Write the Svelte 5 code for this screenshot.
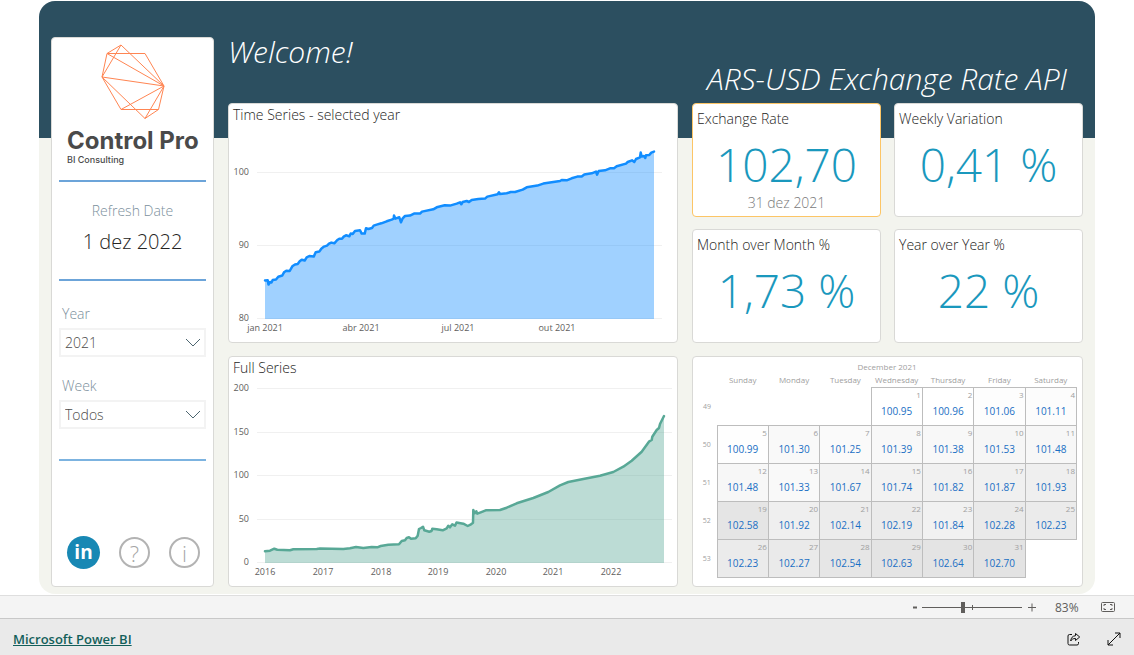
<script lang="ts">
	type Point = [number, number];

	interface Tick {
		at: number;
		label: string;
	}

	interface Chart {
		title: string;
		height: number;
		gridEnd: number;
		yTicks: Tick[];
		xTicks: Tick[];
		points: Point[];
	}

	const yearChart: Chart = {
		title: 'Time Series - selected year',
		height: 216,
		gridEnd: 433,
		yTicks: [
			{ at: 46, label: '100' },
			{ at: 119, label: '90' },
			{ at: 192, label: '80' },
		],
		xTicks: [
			{ at: 36, label: 'jan 2021' },
			{ at: 132, label: 'abr 2021' },
			{ at: 229, label: 'jul 2021' },
			{ at: 328, label: 'out 2021' },
		],
		points: [
			[36, 154.5], [38.7, 154.3], [39.5, 158.5], [41, 156], [42.5, 156.5], [43.7, 154], [47, 153.5],
			[49.3, 150.7], [53.3, 149.5], [55, 146.3], [57.3, 144.7], [60.7, 145], [63.3, 140.3], [66, 138.5],
			[68.7, 138], [70.7, 135.3], [72.7, 133.7], [75.7, 134.5], [77.7, 131.3], [80.3, 130], [84.7, 130.6],
			[86.7, 126.3], [90.3, 125.6], [92.3, 122.7], [95, 120.6], [98, 119.6], [100, 117.7], [102.3, 116.6],
			[105.3, 117.3], [108.3, 114], [110.3, 112.7], [113, 112.7], [114.7, 110.6], [117, 109.3], [120.3, 110.3],
			[121.7, 107.6], [123.7, 108], [126, 105], [131, 104.3], [132.7, 107.6], [135.7, 107.6], [137, 102.3],
			[139.3, 103], [143, 102], [144.7, 99.6], [147.7, 98.6], [152.3, 97.3], [157.7, 95.3], [162.7, 93.6],
			[164.7, 92.6], [165, 89.6], [166.3, 92.6], [170.3, 91.3], [172, 96.3], [173.7, 92.3], [176, 90],
			[181, 89.6], [185, 87.6], [191, 87.6], [193, 85.6], [204.3, 83.3], [207.7, 81.3], [215.7, 79.3],
			[221, 79.6], [227.7, 77.6], [231, 76.3], [232.3, 78.3], [233.7, 76], [237.7, 75], [240, 76],
			[242.7, 74], [249.3, 73], [256, 72.6], [258.3, 70.6], [268.7, 68.3], [270, 66.3], [271, 68],
			[277.7, 67.3], [281.7, 66], [286, 66], [293.7, 63.6], [297.7, 61.3], [308.3, 59.6], [314.3, 57.6],
			[331, 55], [332.7, 54], [337.7, 54.3], [342.7, 52.3], [348.3, 50.6], [352.7, 50.6], [355.3, 48.6],
			[362.7, 47.3], [367, 45.6], [368, 48.6], [369.7, 45], [376, 44.3], [381, 42.3], [385, 42.3],
			[387.7, 40.3], [397, 37.6], [398.7, 36], [403, 34.3], [405.3, 36], [407, 33], [411, 31.3],
			[411.7, 26.6], [412.7, 30.6], [415, 30], [416.3, 32], [417, 29.3], [420.3, 29], [422.3, 26.6],
			[425, 25.6],
		],
	};

	const fullChart: Chart = {
		title: 'Full Series',
		height: 207,
		gridEnd: 443,
		yTicks: [
			{ at: 9, label: '200' },
			{ at: 53, label: '150' },
			{ at: 96, label: '100' },
			{ at: 140, label: '50' },
			{ at: 183, label: '0' },
		],
		xTicks: [
			{ at: 36, label: '2016' },
			{ at: 94, label: '2017' },
			{ at: 152, label: '2018' },
			{ at: 209, label: '2019' },
			{ at: 267, label: '2020' },
			{ at: 324, label: '2021' },
			{ at: 382, label: '2022' },
		],
		points: [
			[36, 172.3], [41, 171.7], [45.3, 169.7], [48.3, 170.7], [61, 171.3], [64.3, 170.3], [87.7, 170],
			[91, 169.6], [114.3, 170], [121, 169.3], [127, 168], [134.3, 169], [142.7, 168], [148.3, 168.3],
			[151.7, 167], [159.3, 165.7], [170, 165.3], [172.7, 162], [176, 161.3], [177.7, 159], [180, 158.3],
			[182, 159.7], [186.7, 159.3], [188.7, 156.7], [190, 150], [192, 149], [194, 147.7], [195.3, 151.3],
			[200.3, 152.7], [202.6, 152], [203.3, 149.7], [207.7, 150.3], [213.7, 151.3], [217.7, 149.3],
			[219.3, 146.7], [221, 148.3], [223.3, 145.3], [226, 146.7], [227.5, 143.5], [234.3, 144.7],
			[238.7, 147], [242, 145.3], [244, 143.7], [244.3, 131], [245.7, 134.3], [247.3, 132.3],
			[248.3, 134.7], [251.7, 133.3], [256.7, 131.3], [271, 131], [277.7, 128.7], [287.7, 124.3],
			[304.3, 119], [319.3, 113], [331, 106.3], [339.3, 103], [354.3, 100], [371, 96.7], [384.3, 93],
			[394.3, 87.7], [402.7, 81.7], [412.7, 72.7], [420.3, 62.3], [422.7, 61], [423.3, 57.7],
			[427.7, 51], [430, 49], [431, 45], [435, 37],
		],
	};

	const kpis = [
		{ title: 'Exchange Rate', value: '102,70', note: '31 dez 2021', active: true },
		{ title: 'Weekly Variation', value: '0,41 %' },
		{ title: 'Month over Month %', value: '1,73 %' },
		{ title: 'Year over Year %', value: '22 %' },
	];

	const weekdays = ['Sunday', 'Monday', 'Tuesday', 'Wednesday', 'Thursday', 'Friday', 'Saturday'];

	// December 2021 starts on a Wednesday
	const firstWeekday = 3;
	const firstWeek = 49;
	const rates = [
		100.95, 100.96, 101.06, 101.11, 100.99, 101.3, 101.25, 101.39, 101.38, 101.53, 101.48,
		101.48, 101.33, 101.67, 101.74, 101.82, 101.87, 101.93, 102.58, 101.92, 102.14, 102.19,
		101.84, 102.28, 102.23, 102.23, 102.27, 102.54, 102.63, 102.64, 102.7,
	];

	const minRate = Math.min(...rates);
	const maxRate = Math.max(...rates);

	const weeks = Array.from({ length: 5 }, (_, w) => ({
		number: firstWeek + w,
		days: weekdays.map((_, d) => {
			const day = w * 7 + d - firstWeekday + 1;
			return { day, rate: rates[day - 1] };
		}),
	}));

	let year = $state('2021');
	let week = $state('Todos');
	let zoom = $state(41);

	function shade(rate: number) {
		const level = Math.round(255 - ((rate - minRate) / (maxRate - minRate)) * 28);
		return `rgb(${level}, ${level}, ${level})`;
	}

	function toPath(points: Point[]) {
		return 'M' + points.map((p) => p.join(' ')).join('L');
	}

	function toArea(points: Point[], base: number) {
		return `${toPath(points)}V${base}H${points[0][0]}Z`;
	}
</script>

{#snippet areaChart(chart: Chart, tone: string)}
	{@const base = chart.yTicks[chart.yTicks.length - 1].at}
	<section class="card chart {tone}">
		<h2>{chart.title}</h2>
		<svg viewBox="0 0 448 {chart.height}" role="img" aria-label={chart.title}>
			{#each chart.yTicks as tick}
				<line class="grid" x1="28" x2={chart.gridEnd} y1={tick.at + 0.5} y2={tick.at + 0.5} />
				<text class="axis" x="20" y={tick.at + 3} text-anchor="end">{tick.label}</text>
			{/each}
			<path class="area" d={toArea(chart.points, base + 1)} />
			<path class="line" d={toPath(chart.points)} />
			{#each chart.xTicks as tick}
				<text class="axis" x={tick.at} y={base + 13} text-anchor="middle">{tick.label}</text>
			{/each}
		</svg>
	</section>
{/snippet}

{#snippet chevron()}
	<svg class="chevron" viewBox="0 0 16 10" aria-hidden="true">
		<path d="M1 1l7 7 7-7" />
	</svg>
{/snippet}

<main class="report">
	<aside class="card sidebar">
		<div class="brand">
			<svg class="logo" viewBox="0 0 64 76" aria-hidden="true">
				<path d="M20 1L6 9.500H44L63 42 57.500 65.500H20L1 33 6 9.500M20 1L1 33M20 1L63 42M6 9.500L63 42M1 33L63 42M1 33L44 74.500 63 42M20 65.500L63 42M44 74.500L57.500 65.500" />
			</svg>
			<strong>Control Pro</strong>
			<small>BI Consulting</small>
		</div>
		<div class="refresh">
			<span>Refresh Date</span>
			<b>1 dez 2022</b>
		</div>
		<div class="filters">
			<label for="year">Year</label>
			<div class="select">
				<select id="year" bind:value={year}>
					<option>2021</option>
					<option>2022</option>
				</select>
				{@render chevron()}
			</div>
			<label for="week">Week</label>
			<div class="select">
				<select id="week" bind:value={week}>
					<option>Todos</option>
					{#each weeks as w}
						<option>{w.number}</option>
					{/each}
				</select>
				{@render chevron()}
			</div>
		</div>
		<nav>
			<a class="linkedin" href="#linkedin" aria-label="LinkedIn">in</a>
			<button class="round" aria-label="Help">?</button>
			<button class="round" aria-label="Information">i</button>
		</nav>
	</aside>

	<div class="column">
		<h1>Welcome!</h1>
		{@render areaChart(yearChart, 'blue')}
		{@render areaChart(fullChart, 'green')}
	</div>

	<div class="column">
		<h1 class="api">ARS-USD Exchange Rate API</h1>
		<div class="kpis">
			{#each kpis as kpi}
				<section class="card kpi" class:active={kpi.active}>
					<h2>{kpi.title}</h2>
					<p class="value">{kpi.value}</p>
					{#if kpi.note}
						<p class="note">{kpi.note}</p>
					{/if}
				</section>
			{/each}
		</div>
		<section class="card calendar">
			<table>
				<caption>December 2021</caption>
				<thead>
					<tr>
						<td class="week"></td>
						{#each weekdays as name}
							<th scope="col">{name}</th>
						{/each}
					</tr>
				</thead>
				<tbody>
					{#each weeks as w}
						<tr>
							<th class="week" scope="row">{w.number}</th>
							{#each w.days as { day, rate }}
								{#if rate}
									<td class="day" style="background: {shade(rate)}">
										<span class="date">{day}</span>
										<span class="rate">{rate.toFixed(2)}</span>
									</td>
								{:else}
									<td></td>
								{/if}
							{/each}
						</tr>
					{/each}
				</tbody>
			</table>
		</section>
	</div>
</main>

<div class="zoombar">
	<button aria-label="Zoom out">
		<svg width="6" height="12" viewBox="0 0 6 12"><path d="M1 6.500h4" stroke-width="2" /></svg>
	</button>
	<input type="range" min="0" max="100" bind:value={zoom} aria-label="Zoom" />
	<button aria-label="Zoom in">
		<svg width="8" height="12" viewBox="0 0 8 12"><path d="M0 6.500h8M4 2.500v8" /></svg>
	</button>
	<output>83%</output>
	<button aria-label="Fit to page">
		<svg width="14" height="12" viewBox="0 0 14 12">
			<rect x="0.500" y="1.500" width="13" height="9" rx="1" />
			<path d="M3 5V3.500h2M9 3.500h2V5M11 7v1.500H9M5 8.500H3V7" />
		</svg>
	</button>
</div>

<footer>
	<a href="#powerbi">Microsoft Power BI</a>
	<div class="actions">
		<button aria-label="Share">
			<svg width="14" height="14" viewBox="0 0 14 14">
				<path d="M5 2.500H2.500a1.500 1.500 0 0 0-1.500 1.500v7.500A1.500 1.500 0 0 0 2.500 13H10a1.500 1.500 0 0 0 1.500-1.500V10" />
				<path d="M8.500 1.500L12.700 5 8.500 8.500V6.500C6 6.500 4.800 7.200 3.700 9 4 5.800 5.500 4 8.500 3.700z" />
			</svg>
		</button>
		<button aria-label="Full screen">
			<svg width="14" height="14" viewBox="0 0 14 14">
				<path d="M1 13L13 1M8 1h5v5M1 8v5h5" />
			</svg>
		</button>
	</div>
</footer>

<style>
	:global(body) {
		margin: 0;
		background: #fff;
		font-family: 'Open Sans', 'Noto Sans', sans-serif;
		font-weight: 300;
		color: #252423;
	}

	h1,
	h2,
	p {
		margin: 0;
		font-weight: 300;
	}

	button {
		padding: 0;
		border: 0;
		background: none;
		font-family: inherit;
		cursor: pointer;
	}

	svg {
		display: block;
		fill: none;
	}

	.report {
		display: grid;
		grid-template-columns: 163fr 450fr 391fr;
		gap: 14px;
		margin: 1px 39px;
		padding: 36px 12px 7px;
		border-radius: 16px;
		background: linear-gradient(#2c4f60 137px, #f3f4ee 137px);
	}

	.column {
		display: flex;
		flex-direction: column;
		gap: 13px;
		min-width: 0;
	}

	.card {
		box-sizing: border-box;
		border: 1px solid #d9d9d6;
		border-radius: 4px;
		background: #fff;
	}

	h1 {
		height: 53px;
		color: #fff;
		font-size: 30px;
		font-style: italic;
		line-height: 30px;
		white-space: nowrap;
	}

	h1.api {
		box-sizing: border-box;
		padding: 27px 16px 0 0;
		text-align: right;
	}

	h2 {
		padding-left: 4px;
		font-size: 14px;
		line-height: 22px;
	}

	/* sidebar */
	.sidebar {
		display: flex;
		flex-direction: column;
		min-width: 0;
		padding: 6px 7px 17px;
	}

	.brand {
		display: flex;
		flex-direction: column;
		padding: 0 8px;
		height: 136px;
		border-bottom: 2px solid #6ca4d9;
		color: #4a4a4a;
		font-family: Inter, sans-serif;
	}

	.logo {
		width: 64px;
		margin: 0 auto 9px;
		stroke: #ff8552;
	}

	.brand strong {
		font-size: 24px;
		line-height: 24px;
		font-weight: 700;
		white-space: nowrap;
	}

	.brand small {
		margin-top: 2px;
		font-size: 9px;
		line-height: 10px;
		font-weight: 500;
	}

	.refresh {
		display: flex;
		flex-direction: column;
		align-items: center;
		height: 97px;
		border-bottom: 2px solid #6ca4d9;
	}

	.refresh span {
		margin-top: 18px;
		color: #7b8f9c;
		font-size: 14px;
		line-height: 22px;
	}

	.refresh b {
		margin-top: 6px;
		font-size: 20px;
		line-height: 28px;
		font-weight: 300;
	}

	.filters {
		display: flex;
		flex-direction: column;
		padding: 21px 0 30px;
		border-bottom: 2px solid #7cb3e0;
	}

	.filters label {
		padding-left: 3px;
		color: #7b8f9c;
		font-size: 14px;
		line-height: 24px;
	}

	.select {
		position: relative;
		margin: 2px 0 17px;
	}

	.select:last-child {
		margin-bottom: 0;
	}

	select {
		appearance: none;
		width: 100%;
		height: 29px;
		padding: 0 4px;
		border: 2px solid #f3f3f3;
		background: #fff;
		color: #4d4b49;
		font: inherit;
		font-size: 14px;
	}

	.chevron {
		position: absolute;
		right: 5px;
		top: 10px;
		width: 16px;
		stroke: #4d6670;
		pointer-events: none;
	}

	nav {
		display: flex;
		align-items: center;
		justify-content: space-between;
		margin-top: auto;
		padding: 0 6px 0 8px;
	}

	.linkedin {
		width: 33px;
		height: 33px;
		border-radius: 50%;
		background: #1888b4;
		color: #fff;
		font-size: 19px;
		line-height: 32px;
		font-weight: 700;
		text-align: center;
		text-decoration: none;
	}

	.round {
		width: 31px;
		height: 31px;
		border: 2px solid #b3b3b3;
		border-radius: 50%;
		color: #a6a6a6;
		font-size: 22px;
		line-height: 24px;
		font-weight: 300;
	}

	/* charts */
	.chart svg {
		width: 100%;
	}

	.grid {
		stroke: #f0f0f0;
	}

	.axis {
		fill: #605e5c;
		font-size: 9px;
		font-weight: 400;
	}

	.line {
		stroke-width: 2.5;
		stroke-linejoin: round;
		stroke-linecap: round;
	}

	.area {
		fill-opacity: 0.4;
	}

	.blue .line {
		stroke: #118dff;
	}

	.blue .area {
		fill: #118dff;
	}

	.green .line {
		stroke: #58a896;
	}

	.green .area {
		fill: #58a896;
	}

	/* indicators */
	.kpis {
		display: grid;
		grid-template-columns: 1fr 1fr;
		gap: 12px 13px;
	}

	.kpi {
		height: 114px;
		padding-top: 4px;
	}

	.kpi.active {
		border-color: #fcc566;
	}

	.value {
		margin-top: 4px;
		color: #1a98bd;
		font-size: 46px;
		line-height: 60px;
		text-align: center;
	}

	.note {
		color: #7a7a7a;
		font-size: 14px;
		line-height: 18px;
		text-align: center;
	}

	/* calendar */
	.calendar {
		flex: 1;
		padding: 4px 5px 7px 4px;
	}

	table {
		width: 100%;
		table-layout: fixed;
		border-collapse: collapse;
	}

	caption {
		color: #a0a0a0;
		font-size: 8px;
		line-height: 12px;
		font-weight: 400;
	}

	th,
	td {
		padding: 0;
		color: #a0a0a0;
		font-size: 8px;
		font-weight: 400;
		line-height: 14px;
	}

	.week {
		width: 20px;
		font-size: 7px;
	}

	tbody tr {
		height: 38px;
	}

	.day {
		border: 1px solid #bdbdbd;
		vertical-align: top;
	}

	.day span {
		display: block;
	}

	.date {
		padding-right: 1px;
		text-align: right;
	}

	.rate {
		color: #1a6fc4;
		font-size: 10px;
		line-height: 18px;
		text-align: center;
	}

	/* viewer chrome */
	.zoombar {
		display: flex;
		align-items: center;
		justify-content: flex-end;
		height: 22px;
		padding-right: 19px;
		border-top: 1px solid #dedede;
		border-bottom: 1px solid #c8c8c8;
		background: #f4f4f4;
	}

	.zoombar svg {
		stroke: #605e5c;
	}

	input[type='range'] {
		appearance: none;
		width: 100px;
		height: 12px;
		margin: 0 6px 0 4px;
		background:
			linear-gradient(#605e5c, #605e5c) 50% 50% / 1px 5px no-repeat,
			linear-gradient(#605e5c, #605e5c) 0 50% / 100% 1px no-repeat;
	}

	input[type='range']::-webkit-slider-thumb {
		appearance: none;
		width: 4px;
		height: 11px;
		background: #605e5c;
	}

	output {
		width: 24px;
		margin: 0 22px 0 19px;
		color: #605e5c;
		font-size: 12px;
		font-weight: 400;
	}

	footer {
		display: flex;
		align-items: center;
		justify-content: space-between;
		height: 36px;
		padding: 0 13px;
		background: #eaeaea;
	}

	footer a {
		padding-top: 4px;
		color: #135f5a;
		font-size: 13px;
		font-weight: 600;
	}

	.actions {
		display: flex;
		gap: 26px;
		padding-top: 4px;
	}

	.actions svg {
		stroke: #111;
	}
</style>
